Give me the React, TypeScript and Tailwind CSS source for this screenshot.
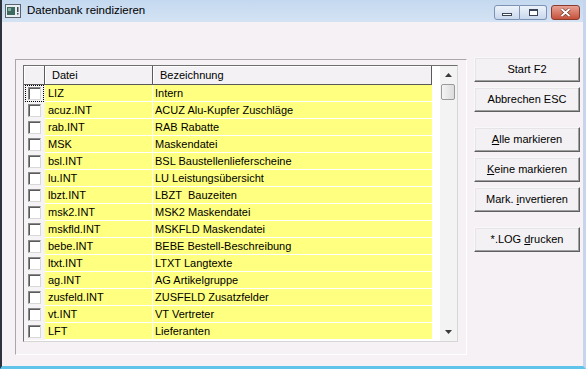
import React from 'react';

const rows: [string, string][] = [
  ['LIZ', 'Intern'],
  ['acuz.INT', 'ACUZ Alu-Kupfer Zuschläge'],
  ['rab.INT', 'RAB Rabatte'],
  ['MSK', 'Maskendatei'],
  ['bsl.INT', 'BSL Baustellenlieferscheine'],
  ['lu.INT', 'LU Leistungsübersicht'],
  ['lbzt.INT', 'LBZT\u00a0 Bauzeiten'],
  ['msk2.INT', 'MSK2 Maskendatei'],
  ['mskfld.INT', 'MSKFLD Maskendatei'],
  ['bebe.INT', 'BEBE Bestell-Beschreibung'],
  ['ltxt.INT', 'LTXT Langtexte'],
  ['ag.INT', 'AG Artikelgruppe'],
  ['zusfeld.INT', 'ZUSFELD Zusatzfelder'],
  ['vt.INT', 'VT Vertreter'],
  ['LFT', 'Lieferanten'],
];

function WinButton({ children, className = '' }: { children: React.ReactNode; className?: string }) {
  return (
    <div
      className={`flex h-[25px] w-[106px] items-center justify-center border border-t-[#f8f8f8] border-l-[#f8f8f8] border-r-[#5f5f5f] border-b-[#5f5f5f] bg-[#f3f1f3] text-[11px] text-black shadow-[inset_-1px_-1px_0_#a0a0a0,inset_1px_1px_0_#e6e4e6] ${className}`}
    >
      {children}
    </div>
  );
}

function Checkbox({ focused }: { focused?: boolean }) {
  return (
    <div className={`flex h-[15px] w-[17px] items-center justify-center ${focused ? 'outline outline-1 outline-dotted outline-black' : ''}`}>
      <div className="h-[13px] w-[13px] border border-t-[#8a8a8a] border-l-[#8a8a8a] border-r-[#d8d8d8] border-b-[#d8d8d8] bg-white shadow-[inset_1px_1px_0_#5a5a5a]" />
    </div>
  );
}

export default function App() {
  return (
    <div
      className="flex h-[369px] w-[586px] flex-col overflow-hidden border-l-2 border-r-[3px] border-b-[3px] border-l-[#2d323c] border-r-[#c6d4ee] border-b-[#5fc3ea] bg-[#f5f1f5]"
      style={{ fontFamily: '"Liberation Sans", Arial, sans-serif' }}
    >
      {/* title bar */}
      <div className="relative flex h-[22px] items-center bg-gradient-to-b from-[#c4d8ef] to-[#d4e3f4]">
        <svg className="ml-[3px] h-[14px] w-[16px]" viewBox="0 0 16 14">
          <rect x="0.5" y="0.5" width="15" height="13" fill="#e8eef2" stroke="#5a6470" />
          <rect x="2" y="3" width="8" height="8" fill="#3d6b62" />
          <rect x="3" y="4" width="3" height="3" fill="#7fb0a0" />
          <rect x="12" y="3" width="1.5" height="5" fill="#404850" />
          <rect x="12" y="9" width="1.5" height="1.5" fill="#404850" />
        </svg>
        <span className="ml-[6px] text-[11.5px] text-black">Datenbank reindizieren</span>
        <div className="absolute right-[3px] top-[5px] flex items-center">
          <div className="flex h-[15px] w-[26px] items-center justify-center rounded-l-[3px] border border-[#7d93b6] bg-gradient-to-b from-[#eef3fa] to-[#c9d8ec]">
            <div className="mt-[4px] h-[3px] w-[10px] border border-[#3a4558] bg-white" />
          </div>
          <div className="flex h-[15px] w-[27px] items-center justify-center rounded-r-[3px] border border-l-0 border-[#7d93b6] bg-gradient-to-b from-[#eef3fa] to-[#c9d8ec]">
            <div className="h-[7px] w-[9px] border border-[#3a4558] bg-white shadow-[inset_0_1px_0_#3a4558]" />
          </div>
          <div className="ml-[4px] flex h-[15px] w-[29px] items-center justify-center rounded-[3px] border border-[#8b3a2c] bg-gradient-to-b from-[#e7a193] to-[#c5503b]">
            <svg width="11" height="9" viewBox="0 0 11 9">
              <path d="M1.5 1 L9.5 8 M9.5 1 L1.5 8" stroke="#5a2218" strokeWidth="3" />
              <path d="M1.5 1 L9.5 8 M9.5 1 L1.5 8" stroke="#ffffff" strokeWidth="2" />
            </svg>
          </div>
        </div>
      </div>

      {/* body */}
      <div className="flex flex-1 items-start">
        {/* group */}
        <div className="ml-[13px] mt-[37px] h-[296px] w-[452px] border border-t-[#a9a7ab] border-l-[#a9a7ab] border-r-white border-b-white pl-[7px] pt-[5px]">
          <div className="flex h-[277px] w-[435px] border border-t-[#6f6f6f] border-l-[#6f6f6f] border-r-[#d6d6d6] border-b-[#d6d6d6] bg-white">
            <div className="flex w-[416px] flex-col bg-white text-[11px] text-black">
              {/* header */}
              <div className="flex h-[19px] bg-[#f3f1f3]">
                <div className="w-[21px] border-r border-b border-[#5a5a5a] shadow-[inset_1px_1px_0_#ffffff]" />
                <div className="flex w-[108px] items-center border-r border-b border-[#5a5a5a] pl-[7px] shadow-[inset_1px_1px_0_#ffffff]">Datei</div>
                <div className="flex w-[279px] items-center border-r border-b border-[#5a5a5a] pl-[7px] shadow-[inset_1px_1px_0_#ffffff]">Bezeichnung</div>
                <div className="flex-1 bg-white" />
              </div>
              {rows.map(([file, desc], i) => (
                <div key={file} className="flex h-[17px]">
                  <div className="flex w-[21px] items-center justify-center border-b border-[#f5f3f5] bg-[#f5f3f5]">
                    <Checkbox focused={i === 0} />
                  </div>
                  <div className="flex w-[108px] items-center border-r border-b border-white bg-[#ffff80] pl-[3px]">{file}</div>
                  <div className="flex w-[279px] items-center border-b border-white bg-[#ffff80] pl-[2px] whitespace-pre">{desc}</div>
                  <div className="flex-1 bg-white" />
                </div>
              ))}
            </div>
            {/* scrollbar */}
            <div className="flex w-[17px] flex-col bg-[#f4f3f4]">
              <div className="flex h-[18px] items-center justify-center">
                <svg width="7" height="4" viewBox="0 0 7 4"><path d="M3.5 0 L7 4 L0 4 Z" fill="#3a3a3a" /></svg>
              </div>
              <div className="ml-[1px] h-[16px] w-[14px] rounded-[2px] border border-[#9a9a9a] bg-gradient-to-r from-[#f4f4f4] to-[#dcdcdc]" />
              <div className="flex-1" />
              <div className="flex h-[18px] items-center justify-center">
                <svg width="7" height="4" viewBox="0 0 7 4"><path d="M0 0 L7 0 L3.5 4 Z" fill="#3a3a3a" /></svg>
              </div>
            </div>
          </div>
        </div>

        {/* buttons */}
        <div className="ml-[7px] mt-[35px] flex flex-col">
          <WinButton>Start F2</WinButton>
          <WinButton className="mt-[5px]">Abbrechen ESC</WinButton>
          <WinButton className="mt-[15px]">
            <span><span className="underline">A</span>lle markieren</span>
          </WinButton>
          <WinButton className="mt-[5px]">
            <span><span className="underline">K</span>eine markieren</span>
          </WinButton>
          <WinButton className="mt-[5px]">
            <span>Mark. <span className="underline">i</span>nvertieren</span>
          </WinButton>
          <WinButton className="mt-[15px]">
            <span>*.LOG <span className="underline">d</span>rucken</span>
          </WinButton>
        </div>
      </div>
    </div>
  );
}
